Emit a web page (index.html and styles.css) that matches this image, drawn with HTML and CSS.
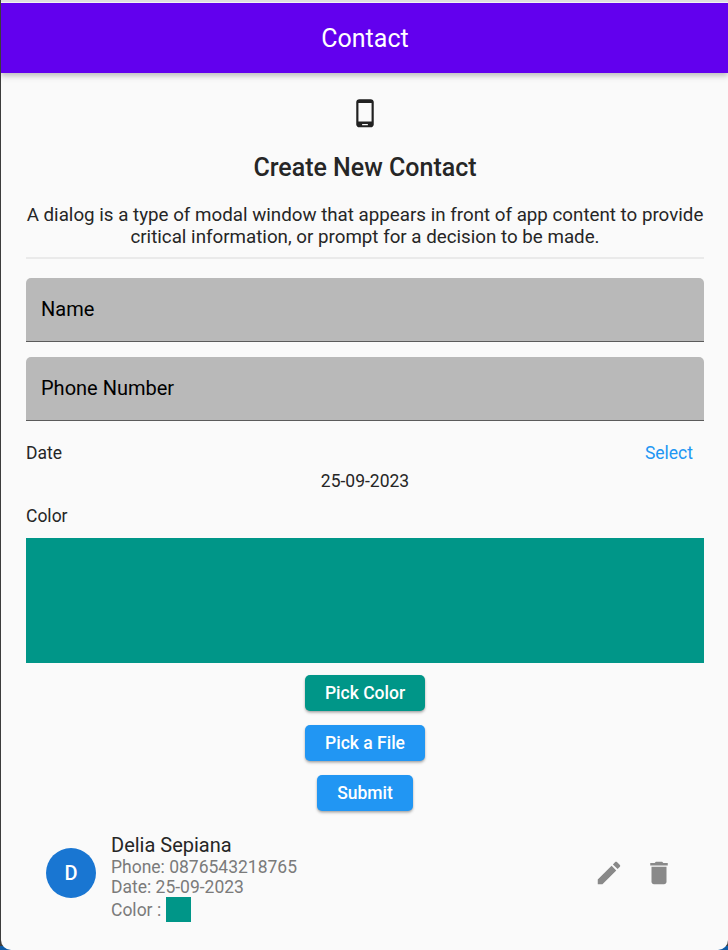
FILE: index.html
```html
<!DOCTYPE html>
<html lang="en">
<head>
<meta charset="utf-8">
<title>Contact</title>
<link rel="stylesheet" href="styles.css">
</head>
<body>
<div class="window">
  <header class="app-bar"><h1>Contact</h1></header>
  <main class="content">
    <svg class="phone-icon" viewBox="0 0 24 24"><path d="M16.500 1h-9C6.100 1 5 2 5 3.200v17.900C5 22.300 6.100 23.400 7.500 23.400h9c1.400 0 2.500-1.100 2.500-2.300V3.200C19 2 17.900 1 16.500 1zm-2.200 20.800H9.700v-1h4.600v1zm2.950-3.100H6.750V4h10.500v14.700z"/></svg>
    <h2 class="heading">Create New Contact</h2>
    <p class="description">A dialog is a type of modal window that appears in front of app content to provide<br>critical information, or prompt for a decision to be made.</p>
    <div class="divider"></div>
    <div class="field">Name</div>
    <div class="field">Phone Number</div>
    <div class="date-row"><span>Date</span><span class="select">Select</span></div>
    <div class="date-value">25-09-2023</div>
    <div class="color-label">Color</div>
    <div class="color-preview"></div>
    <div class="actions">
      <button class="button teal">Pick Color</button>
      <button class="button">Pick a File</button>
      <button class="button">Submit</button>
    </div>
    <div class="contact">
      <div class="avatar">D</div>
      <div class="details">
        <div class="name">Delia Sepiana</div>
        <div class="line">Phone: 0876543218765</div>
        <div class="line">Date: 25-09-2023</div>
        <div class="line color-line"><span class="color-text">Color :</span><span class="swatch"></span></div>
      </div>
      <div class="contact-actions">
        <svg class="icon" viewBox="0 0 24 24"><path d="M3 17.25V21h3.75L17.81 9.94l-3.75-3.75L3 17.25zM20.71 7.04c.39-.39.39-1.02 0-1.41l-2.34-2.34c-.39-.39-1.02-.39-1.41 0l-1.83 1.83 3.75 3.75 1.83-1.83z"/></svg>
        <svg class="icon" viewBox="0 0 24 24"><path d="M6 19c0 1.100.9 2 2 2h8c1.100 0 2-.9 2-2V7H6v12zM19 4h-3.500l-1-1h-5l-1 1H5v2h14V4z"/></svg>
      </div>
    </div>
  </main>
</div>
</body>
</html>
```
FILE: styles.css
```css
* {
  box-sizing: border-box;
}

body {
  margin: 0;
  background: linear-gradient(#3c3c3c 946px, #0d5aa5 946px);
  font-family: Roboto, sans-serif;
  color: #262626;
}

.window {
  height: 950px;
  margin-left: 1px;
  border-top: 2px solid #dedede;
  padding-top: 1px;
  background: #fafafa;
  border-radius: 0 0 10px 10px;
  overflow: hidden;
}

.app-bar {
  height: 70px;
  display: flex;
  align-items: center;
  justify-content: center;
  background: #6200ee;
  color: #fff;
  box-shadow: 0 2px 5px rgba(0, 0, 0, 0.2), 0 5px 6px rgba(0, 0, 0, 0.07);
}

h1 {
  margin: 0;
  padding-left: 1px;
  font-size: 25px;
  font-weight: 400;
  letter-spacing: 0.05px;
}

.content {
  display: flex;
  flex-direction: column;
  padding: 25px 24px 0 25px;
}

.phone-icon {
  width: 30px;
  height: 30px;
  align-self: center;
  fill: #212121;
}

.heading {
  margin: 21px 0 0;
  font-size: 25px;
  line-height: 38px;
  font-weight: 500;
  text-align: center;
}

.description {
  margin: 17px 0 0;
  font-size: 18.75px;
  line-height: 22px;
  text-align: center;
  white-space: nowrap;
}

.divider {
  height: 2px;
  margin: 9px 0 19px;
  background: #eaeaea;
}

.field {
  height: 64px;
  margin-bottom: 15px;
  padding: 0 15px;
  line-height: 62px;
  font-size: 20px;
  color: #000;
  background: #b9b9b9;
  border-bottom: 1px solid #5b5b5b;
  border-radius: 5px 5px 0 0;
}

.date-row {
  display: flex;
  justify-content: space-between;
  margin-top: 6px;
  font-size: 17.5px;
  line-height: 22px;
}

.select {
  margin-right: 11px;
  color: #2196f3;
}

.date-value {
  margin-top: 6px;
  font-size: 17.5px;
  line-height: 22px;
  text-align: center;
}

.color-label {
  margin-top: 13px;
  font-size: 17.5px;
  line-height: 22px;
}

.color-preview {
  height: 125px;
  margin-top: 11px;
  background: #009688;
}

.actions {
  display: flex;
  flex-direction: column;
  align-items: center;
  gap: 14.5px;
  margin-top: 12px;
}

.button {
  height: 35.5px;
  padding: 0 20px;
  border: 0;
  border-radius: 5px;
  background: #2196f3;
  color: #fff;
  font: 500 17.5px Roboto, sans-serif;
  box-shadow: 0 2px 3px rgba(0, 0, 0, 0.22), 0 1px 2px rgba(0, 0, 0, 0.15);
}

.teal {
  background: #009688;
}

.contact {
  display: flex;
  align-items: flex-start;
  margin: 22.5px 30px 0 20px;
}

.avatar {
  width: 50px;
  height: 50px;
  margin-top: 15px;
  border-radius: 50%;
  background: #1976d2;
  color: #fff;
  font-size: 20px;
  font-weight: 500;
  line-height: 50px;
  text-align: center;
}

.details {
  flex: 1;
  margin-left: 15px;
}

.name {
  font-size: 20px;
  line-height: 24px;
}

.line {
  font-size: 17.5px;
  line-height: 20px;
  color: #7b7b7b;
}

.color-line {
  display: flex;
  align-items: center;
  gap: 5px;
}

.color-text {
  padding-top: 1px;
}

.swatch {
  width: 25px;
  height: 25px;
  background: #009688;
}

.contact-actions {
  display: flex;
  gap: 20px;
  margin-top: 25px;
}

.icon {
  width: 30px;
  height: 30px;
  fill: #898989;
}
```
